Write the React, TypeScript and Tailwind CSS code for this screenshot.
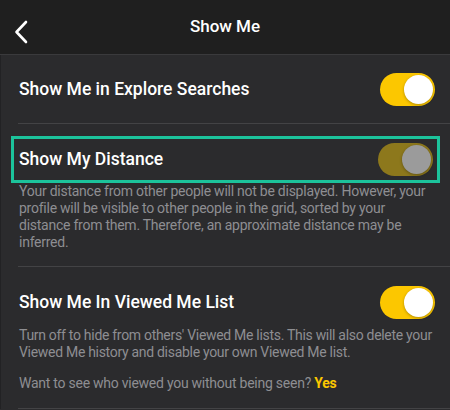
import { useState } from 'react';

type ToggleProps = {
    on: boolean;
    disabled?: boolean;
    onChange?: () => void;
};

const Toggle = ({ on, disabled, onChange }: ToggleProps) => (
    <button
        type="button"
        onClick={onChange}
        className={`flex h-[33px] w-[55px] shrink-0 items-center rounded-full p-[2px] ${
            on ? 'justify-end' : 'justify-start'
        } ${disabled ? 'bg-[#8d781c]' : on ? 'bg-[#fcc700]' : 'bg-[#48484a]'}`}
    >
        <span
            className={`block h-[29px] w-[29px] rounded-full shadow-[0_1px_3px_rgba(0,0,0,0.3)] ${
                disabled ? 'bg-[#9b9b9b]' : 'bg-white'
            }`}
        />
    </button>
);

const App = () => {
    const [explore, setExplore] = useState(true);
    const [viewed, setViewed] = useState(true);

    return (
        <div
            className="h-[410px] w-[450px] overflow-hidden bg-[#2b2b2d] text-white"
            style={{ fontFamily: 'Roboto, "Noto Sans", sans-serif' }}
        >
            {/* top bar */}
            <header className="relative flex h-[55px] items-center justify-center border-b border-[#3a3a3c] bg-[#1f1f1f]">
                <button type="button" className="absolute left-[12px] top-[18px] p-[2px]">
                    <svg width="14" height="24" viewBox="0 0 14 24" fill="none">
                        <path
                            d="M12 2 L2.5 12 L12 22"
                            stroke="white"
                            strokeWidth="2.6"
                            strokeLinecap="round"
                            strokeLinejoin="round"
                        />
                    </svg>
                </button>
                <h1 className="text-[17px] font-medium">Show Me</h1>
            </header>

            <div className="border-l border-[#222224]">
                {/* explore */}
                <div className="flex h-[68px] items-center justify-between pl-[18px] pr-[15px]">
                    <span className="text-[17.5px] font-medium">Show Me in Explore Searches</span>
                    <Toggle on={explore} onChange={() => setExplore(!explore)} />
                </div>
                <div className="ml-[17px] h-px bg-[#434345]" />

                {/* distance */}
                <div className="pt-[12px] pb-[15px]">
                    <div className="mx-[10px] flex h-[47px] items-center justify-between border-[3px] border-[#1cc39b] pl-[5px] pr-[4px]">
                        <span className="text-[17.5px] font-medium">Show My Distance</span>
                        <Toggle on disabled />
                    </div>
                    <p className="pl-[18px] pr-[15px] text-[14px] leading-[17px] tracking-[-0.25px] text-[#8e8e92]">
                        Your distance from other people will not be displayed. However, your profile will
                        be visible to other people in the grid, sorted by your distance from them.
                        Therefore, an approximate distance may be inferred.
                    </p>
                </div>
                <div className="ml-[17px] h-px bg-[#434345]" />

                {/* viewed me */}
                <div className="pt-[19px] pb-[16px] pl-[18px] pr-[8px]">
                    <div className="flex items-center justify-between pr-[7px]">
                        <span className="text-[17.5px] font-medium">Show Me In Viewed Me List</span>
                        <Toggle on={viewed} onChange={() => setViewed(!viewed)} />
                    </div>
                    <p className="mt-[8px] text-[14px] leading-[17px] tracking-[-0.3px] text-[#8e8e92]">
                        Turn off to hide from others' Viewed Me lists. This will also delete your Viewed
                        Me history and disable your own Viewed Me list.
                    </p>
                    <p className="mt-[14px] text-[14px] leading-[17px] tracking-[-0.25px] text-[#8e8e92]">
                        Want to see who viewed you without being seen?{' '}
                        <span className="font-bold text-[#fcc700]">Yes</span>
                    </p>
                </div>
                <div className="ml-[17px] h-px bg-[#434345]" />
            </div>
        </div>
    );
};

export default App;
